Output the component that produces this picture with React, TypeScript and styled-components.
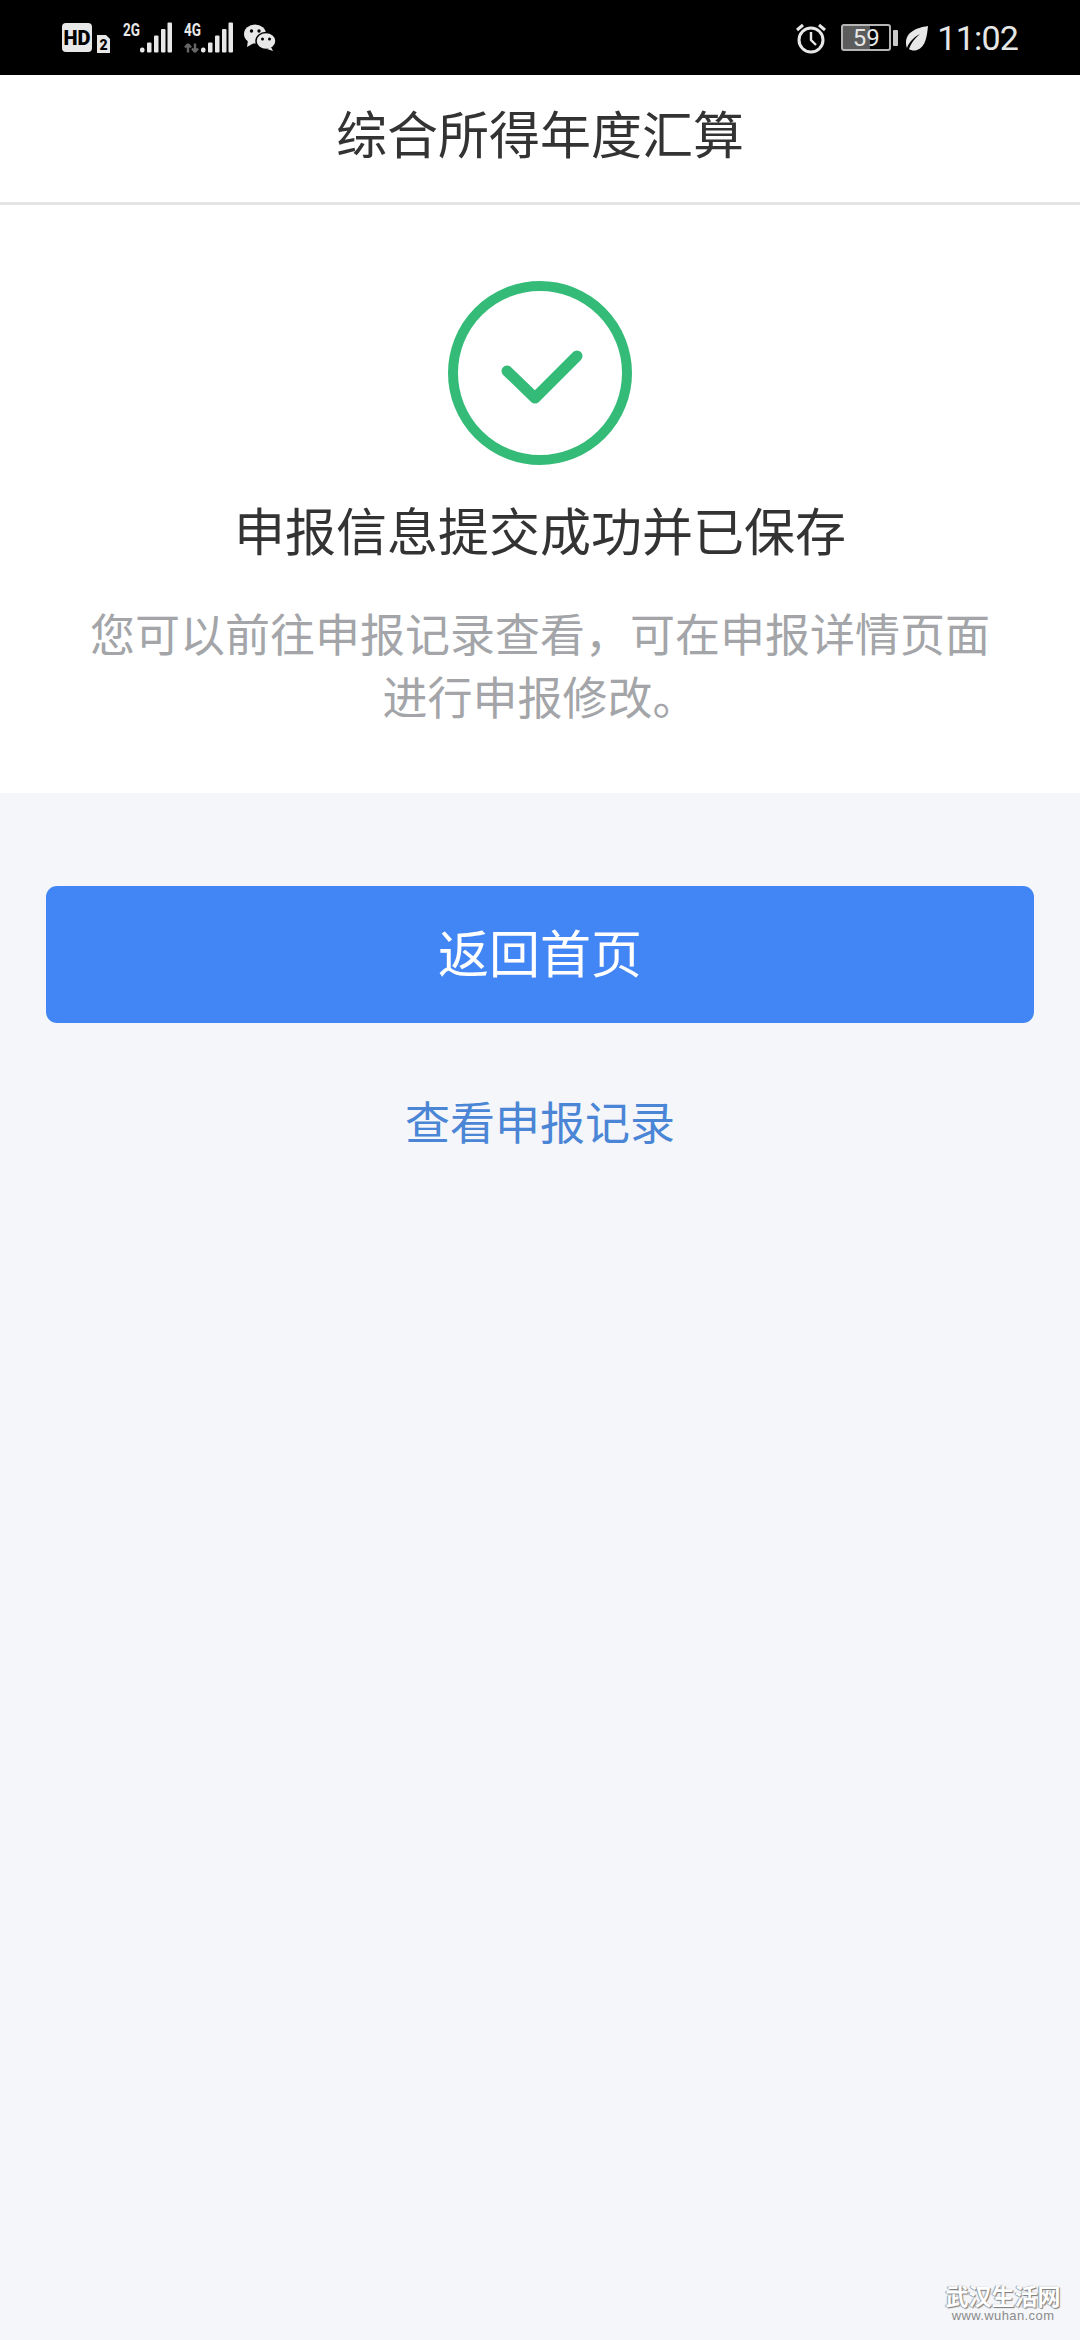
import React from 'react';
import styled, {createGlobalStyle} from 'styled-components';

const GlobalStyle = createGlobalStyle`
  html, body {
    margin: 0;
    padding: 0;
    background: #f4f6f9;
  }
  body {
    font-family: "Noto Sans CJK SC", "Liberation Sans", sans-serif;
  }
`

const Page = styled.div`
  width: 1080px;
  height: 2340px;
  position: relative;
  overflow: hidden;
  background: #f4f6f9;
`

const StatusBar = styled.div`
  height: 75px;
  background: #000;
  display: flex;
  justify-content: space-between;
  align-items: center;
  padding: 0 62px;
  color: #e8e8e8;
`

const StatusGroup = styled.div`
  display: flex;
  align-items: center;
`

const Clock = styled.span`
  font-family: Roboto, "Liberation Sans", sans-serif;
  font-size: 34px;
  line-height: 40px;
  letter-spacing: -0.8px;
  margin-left: 8px;
  color: #e6e6e6;
`

const Battery = styled.div`
  width: 50px;
  height: 27px;
  margin-left: 14px;
  box-sizing: border-box;
  border: 2px solid #b5b5b5;
  border-radius: 3px;
  display: flex;
  align-items: center;
  justify-content: center;
  font-family: Roboto, "Liberation Sans", sans-serif;
  font-size: 24px;
  color: #e6e6e6;
  background: linear-gradient(to right, #5c5c5c 59%, #000 59%);
`

const BatteryTip = styled.div`
  width: 5px;
  height: 16px;
  margin-left: 2px;
  margin-right: 7px;
  background: #c9c9c9;
  border-radius: 1px;
`

const Header = styled.header`
  height: 127px;
  background: #fff;
  border-bottom: 3px solid #e3e4e6;
  display: flex;
  align-items: center;
  justify-content: center;
  font-size: 51px;
  color: #333;
  line-height: 1;
`

const HeaderTitle = styled.span`
  margin-bottom: 12px;
`

const ResultPanel = styled.section`
  height: 588px;
  box-sizing: border-box;
  background: #fff;
  padding-top: 75px;
  display: flex;
  flex-direction: column;
  align-items: center;
`

const ResultTitle = styled.h1`
  margin: 31px 0 0;
  font-size: 51px;
  font-weight: 400;
  line-height: 64px;
  color: #333;
`

const ResultNote = styled.p`
  margin: 40px 0 0;
  width: 910px;
  font-size: 45px;
  line-height: 63px;
  color: #a3a5a9;
  text-align: center;
`

const Actions = styled.div`
  padding: 93px 46px 0;
  display: flex;
  flex-direction: column;
  align-items: center;
`

const PrimaryButton = styled.button`
  width: 100%;
  height: 137px;
  border: none;
  border-radius: 11px;
  background: #4285f4;
  color: #fff;
  font-family: inherit;
  font-size: 51px;
  padding: 0 0 8px;
`

const RecordLink = styled.a`
  margin-top: 68px;
  font-size: 45px;
  line-height: 60px;
  color: #4a85d6;
`

const Watermark = styled.div`
  position: absolute;
  right: 19px;
  bottom: 17px;
  width: 116px;
  text-align: center;
  color: #fff;
  text-shadow: 1px 1px 1px #777, -1px 0 1px #999;
`

const WatermarkName = styled.div`
  font-size: 23px;
  line-height: 25px;
  font-weight: 700;
  white-space: nowrap;
`

const WatermarkUrl = styled.div`
  font-family: "Liberation Sans", sans-serif;
  font-size: 13px;
  line-height: 15px;
  letter-spacing: 0.4px;
  color: #8b8b8b;
  text-shadow: none;
`

const SimIcon = styled.svg`
  margin-right: 11px;
`

const SignalIcon = styled.svg<{$gap: number}>`
  margin-right: ${p => p.$gap}px;
`

const Signal: React.FC<{label: string, swap?: boolean}> = ({label, swap}) => (
    <SignalIcon width="49" height="40" viewBox="0 0 49 40" $gap={swap ? 11 : 12}>
        <text x="0" y="17.500" fontFamily="Roboto, sans-serif" fontSize="18" fontWeight="700" fill="#e8e8e8" textLength="17" lengthAdjust="spacingAndGlyphs">{label}</text>
        {swap && <path d="M4 34.500V26M4 26l-3 3.500M4 26l3 3.500M11 25.500V34M11 34l-3-3.500M11 34l3-3.500" stroke="#666" strokeWidth="2.400" fill="none"/>}
        <rect x="17" y="29.500" width="4.500" height="5" rx="2" fill="#e8e8e8"/>
        <rect x="24" y="24.500" width="4.500" height="10" rx="1" fill="#e8e8e8"/>
        <rect x="31" y="17.500" width="4.500" height="17" rx="1" fill="#e8e8e8"/>
        <rect x="38" y="11" width="4.500" height="23.500" rx="1" fill="#e8e8e8"/>
        <rect x="44.500" y="4.500" width="4.500" height="30" rx="1" fill="#e8e8e8"/>
    </SignalIcon>
);

const App: React.FC = () => (
    <Page>
        <GlobalStyle/>
        <StatusBar>
            <StatusGroup>
                <SimIcon width="50" height="32" viewBox="0 0 50 32">
                    <rect x="0" y="1" width="30" height="29" rx="4" fill="#e8e8e8"/>
                    <text x="15" y="22.500" textAnchor="middle" fontFamily="Roboto, sans-serif" fontSize="20" fontWeight="900" fill="#000">HD</text>
                    <path d="M35 13h9l4 4v14H35z" fill="#e8e8e8"/>
                    <text x="41.500" y="28" textAnchor="middle" fontFamily="Roboto, sans-serif" fontSize="14" fontWeight="900" fill="#000">2</text>
                </SimIcon>
                <Signal label="2G"/>
                <Signal label="4G" swap/>
                <svg width="32" height="28" viewBox="0 0 32 28">
                    <ellipse cx="11" cy="10" rx="11" ry="9.500" fill="#e8e8e8"/>
                    <path d="M4 16l-1 7 7-4z" fill="#e8e8e8"/>
                    <ellipse cx="22" cy="17" rx="10" ry="8.500" fill="#e8e8e8" stroke="#000" strokeWidth="1.500"/>
                    <path d="M27 23l2 4-6-2z" fill="#e8e8e8"/>
                    <circle cx="7.500" cy="7" r="1.700" fill="#000"/>
                    <circle cx="15" cy="7" r="1.700" fill="#000"/>
                    <circle cx="18.500" cy="15" r="1.500" fill="#000"/>
                    <circle cx="25.500" cy="15" r="1.500" fill="#000"/>
                </svg>
            </StatusGroup>
            <StatusGroup>
                <svg width="32" height="32" viewBox="0 0 32 32">
                    <circle cx="16" cy="18" r="12" fill="none" stroke="#e8e8e8" strokeWidth="3"/>
                    <path d="M16 10v8l5 5" fill="none" stroke="#e8e8e8" strokeWidth="2.400"/>
                    <path d="M2 8l6-5M30 8l-6-5" stroke="#e8e8e8" strokeWidth="3" fill="none"/>
                </svg>
                <Battery>59</Battery>
                <BatteryTip/>
                <svg width="24" height="26" viewBox="0 0 24 26">
                    <path d="M23 1C11 3 1 7 1 18c0 2 .5 4 1 5 2-6 7-11 13-14-5 4-9 9-11 15 2 1.500 5 2 8 1C21 22 22 10 23 1z" fill="#e8e8e8"/>
                </svg>
                <Clock>11:02</Clock>
            </StatusGroup>
        </StatusBar>
        <Header><HeaderTitle>综合所得年度汇算</HeaderTitle></Header>
        <ResultPanel>
            <svg width="186" height="186" viewBox="0 0 186 186">
                <circle cx="93" cy="93" r="87" fill="none" stroke="#35bb78" strokeWidth="10"/>
                <path d="M60 91l28 27 42-42" fill="none" stroke="#35bb78" strokeWidth="11" strokeLinecap="round" strokeLinejoin="round"/>
            </svg>
            <ResultTitle>申报信息提交成功并已保存</ResultTitle>
            <ResultNote>您可以前往申报记录查看，可在申报详情页面进行申报修改。</ResultNote>
        </ResultPanel>
        <Actions>
            <PrimaryButton>返回首页</PrimaryButton>
            <RecordLink>查看申报记录</RecordLink>
        </Actions>
        <Watermark>
            <WatermarkName>武汉生活网</WatermarkName>
            <WatermarkUrl>www.wuhan.com</WatermarkUrl>
        </Watermark>
    </Page>
);

export default App;
